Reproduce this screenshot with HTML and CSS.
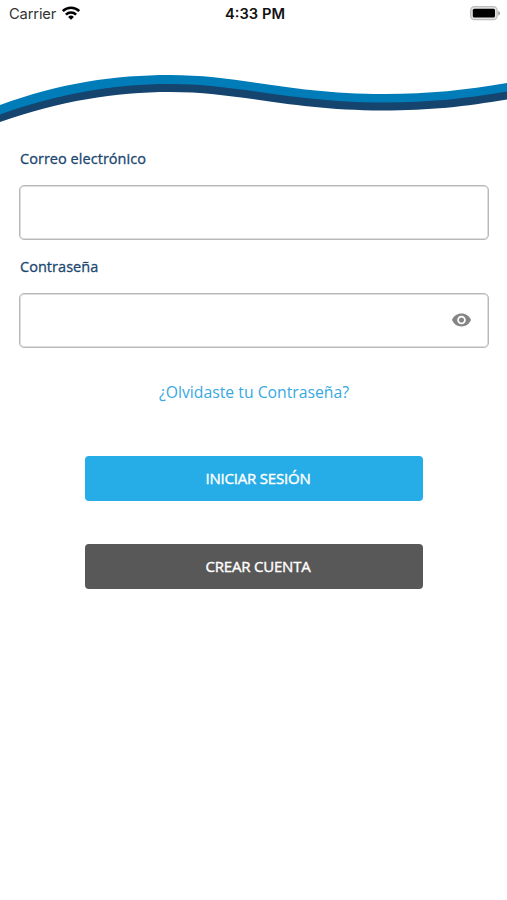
FILE: index.html
```html
<!DOCTYPE html>
<html lang="es">
<head>
<meta charset="utf-8">
<meta name="viewport" content="width=device-width, initial-scale=1">
<title>Iniciar sesión</title>
<link rel="stylesheet" href="styles.css">
</head>
<body>
<header class="status">
  <div class="carrier"><span>Carrier</span>
    <svg class="wifi" viewBox="0 0 18 14" width="18" height="14"><g fill="none" stroke="#000" stroke-width="2.6"><path d="M.8 5.1a11.7 11.7 0 0 1 16.4 0"/><path d="M3.9 8.6a7.3 7.3 0 0 1 10.2 0"/></g><path d="M9 13.8 6.1 10.9a4.1 4.1 0 0 1 5.8 0z"/></svg>
  </div>
  <time class="time">4:33 PM</time>
  <svg class="battery" viewBox="0 0 31 15" width="31" height="15"><rect x=".7" y=".7" width="26.4" height="13" rx="3.8" fill="#e4e4e4" stroke="#bdbdbd" stroke-width="1.3"/><rect x="2.8" y="2.8" width="22.2" height="8.8" rx="1.5"/><path d="M28.2 5v4.600c2.400-.8 2.400-3.800 0-4.600z" fill="#999"/></svg>
</header>
<svg class="wave" viewBox="0 70 507 55" width="507" height="55"><path fill="#15446e" d="M0 107C60 85 115 77 170 77C240 77 290 96 385 96C430 96 465 92 507 85V99.500C465 106.500 430 110.500 383 110.500C290 110.500 240 92 170 92C115 92 60 101 0 122z"/><path fill="#007db8" d="M0 105C60 83 115 75 170 75C240 75 290 94 385 94C430 94 465 90 507 83V91.500C465 98.500 430 102.500 385 102.500C290 102.500 240 84 170 84C115 84 60 93 0 114.500z"/></svg>
<form class="login">
  <label class="label" for="email">Correo electrónico</label>
  <div class="field"><input id="email" type="email"></div>
  <label class="label" for="password">Contraseña</label>
  <div class="field"><input id="password" type="password">
    <svg class="eye" viewBox="1 4 22 16" width="19" height="14"><path fill="#858585" d="M12 4.500C7 4.500 2.730 7.610 1 12c1.730 4.390 6 7.500 11 7.500s9.270-3.110 11-7.500c-1.730-4.390-6-7.500-11-7.500zM12 17c-2.760 0-5-2.240-5-5s2.240-5 5-5 5 2.240 5 5-2.240 5-5 5zm0-8c-1.660 0-3 1.340-3 3s1.340 3 3 3 3-1.340 3-3-1.340-3-3-3z"/></svg>
  </div>
  <a class="forgot">¿Olvidaste tu Contraseña?</a>
  <button class="button primary" type="button">INICIAR SESIÓN</button>
  <button class="button secondary" type="button">CREAR CUENTA</button>
</form>
</body>
</html>
```
FILE: styles.css
```css
* { box-sizing: border-box; }
body { margin: 0; background: #fff; font-family: "Open Sans", sans-serif; }
.status {
  display: grid;
  grid-template-columns: 1fr auto 1fr;
  align-items: center;
  height: 28px;
  padding: 0 6px 1px 9px;
  font: 14.7px/20px Inter, sans-serif;
  color: #111;
}
.carrier { display: flex; align-items: center; gap: 6px; color: #333; letter-spacing: -0.15px; }
.wifi { margin-bottom: 2px; }
.time { font-weight: 600; }
.battery { justify-self: end; }
.wave { display: block; margin-top: 42px; }
.login { display: flex; flex-direction: column; padding: 23px 18px 0 19px; }
.label {
  height: 37px;
  padding-left: 1px;
  font-size: 14.5px;
  line-height: 22px;
  letter-spacing: 0.04px;
  color: #1b4770;
  -webkit-text-stroke: 0.3px #1b4770;
}
.field {
  display: flex;
  align-items: center;
  height: 55px;
  margin-bottom: 16px;
  padding: 0 17px 1px 0;
  border: 1px solid #b8b8b8;
  border-radius: 5px;
  box-shadow: inset 0 0 0 1px #dedede;
}
.field input { flex: 1; min-width: 0; height: 100%; border: 0; outline: 0; background: none; }
.forgot {
  align-self: center;
  margin-top: 17px;
  font-size: 15.75px;
  line-height: 22px;
  color: #37a9df;
}
.button {
  align-self: center;
  width: 338px;
  height: 45px;
  padding: 0 0 2px 8px;
  border: 0;
  border-radius: 4px;
  font: 15px/22px "Open Sans", sans-serif;
  letter-spacing: -0.2px;
  color: #fff;
  -webkit-text-stroke: 0.4px #fff;
}
.primary { margin-top: 53px; background: #26ace7; }
.secondary { margin-top: 43px; background: #585858; }
```
